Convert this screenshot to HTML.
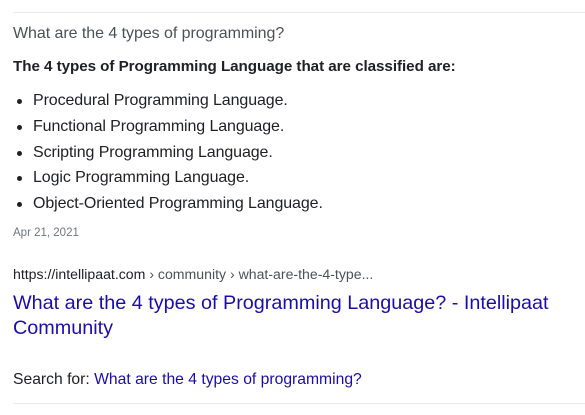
<!DOCTYPE html>
<html><head><style>
body{margin:0;width:585px;height:415px;background:#fff;font-family:"Liberation Sans",Arial,sans-serif;position:relative;overflow:hidden}
.a{position:absolute;left:13px;white-space:nowrap;line-height:1}
.hr{position:absolute;left:13px;right:0;height:1px;background:#e8e8e8}
.li{position:absolute;left:33px;font-size:16px;color:#202124;white-space:nowrap;line-height:1;letter-spacing:-0.1px}
.dot{position:absolute;left:17px;width:5px;height:5px;border-radius:50%;background:#202124}
</style></head><body>
<div class="hr" style="top:12px"></div>
<div class="a" style="top:26px;font-size:16px;color:#4d5156;letter-spacing:-0.05px">What are the 4 types of programming?</div>
<div class="a" style="top:59px;font-size:15.2px;font-weight:bold;color:#202124;letter-spacing:-0.05px">The 4 types of Programming Language that are classified are:</div>
<div class="dot" style="top:99px"></div><div class="li" style="top:93px">Procedural Programming Language.</div>
<div class="dot" style="top:125px"></div><div class="li" style="top:119px">Functional Programming Language.</div>
<div class="dot" style="top:151px"></div><div class="li" style="top:145px">Scripting Programming Language.</div>
<div class="dot" style="top:176px"></div><div class="li" style="top:170px">Logic Programming Language.</div>
<div class="dot" style="top:202px"></div><div class="li" style="top:196px">Object-Oriented Programming Language.</div>
<div class="a" style="top:228px;font-size:11.5px;color:#70757a">Apr 21, 2021</div>
<div class="a" style="top:267px;font-size:14.1px;color:#202124;letter-spacing:0px">https://intellipaat.com <span style="color:#4d5156">› community › what-are-the-4-type...</span></div>
<div class="a" style="top:291px;font-size:19.8px;color:#1a0dab;line-height:25px;letter-spacing:0px">What are the 4 types of Programming Language? - Intellipaat<br>Community</div>
<div class="a" style="top:372px;font-size:15.7px;color:#202124;letter-spacing:0px">Search for: <span style="color:#1a0dab">What are the 4 types of programming?</span></div>
<div class="hr" style="top:403px"></div>
</body></html>
